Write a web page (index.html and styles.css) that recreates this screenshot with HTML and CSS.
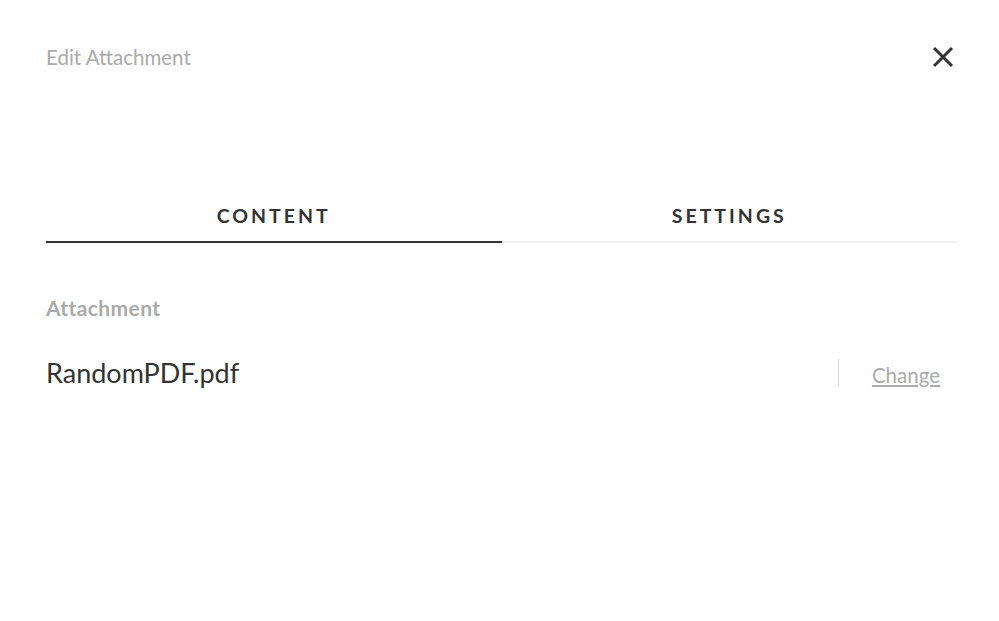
FILE: index.html
```html
<!DOCTYPE html>
<html lang="en">
<head>
    <meta charset="UTF-8">
    <meta name="viewport" content="width=device-width, initial-scale=1.0">
    <title>Edit Attachment</title>
    <link rel="stylesheet" href="styles.css">
</head>
<body>

    <div class="modal">
        <div class="modal-header">
            <h2 class="modal-title">Edit Attachment</h2>
            <button class="close-btn" aria-label="Close">
                <svg width="22" height="22" viewBox="0 0 22 22">
                    <path d="M2 2 L20 20 M20 2 L2 20" stroke="#333" stroke-width="3" fill="none"/>
                </svg>
            </button>
        </div>

        <div class="tabs">
            <div class="tab active">CONTENT</div>
            <div class="tab">SETTINGS</div>
        </div>

        <div class="section">
            <div class="label">Attachment</div>
            <div class="file-row">
                <span class="file-name">RandomPDF.pdf</span>
                <div class="file-actions">
                    <span class="divider"></span>
                    <a href="#" class="change-link">Change</a>
                </div>
            </div>
        </div>
    </div>

</body>
</html>
```

FILE: styles.css
```css
body {
    font-family: Lato, "Open Sans", sans-serif;
    background-color: #ffffff;
    color: #333;
    margin: 0;
}

.modal {
    padding: 38px 42px 0 46px;
}

.modal-header {
    display: flex;
    justify-content: space-between;
    align-items: center;
    height: 38px;
}

.modal-title {
    margin: 0;
    font-size: 20.5px;
    font-weight: 400;
    color: #aaa;
}

.close-btn {
    background: none;
    border: none;
    padding: 0;
    margin-right: 3px;
    cursor: pointer;
    display: flex;
}

.tabs {
    display: flex;
    margin-top: 128px;
}

.tab {
    flex: 1;
    text-align: center;
    font-size: 19.5px;
    font-weight: 700;
    letter-spacing: 3px;
    color: #333;
    padding-bottom: 14px;
    border-bottom: 2px solid #f0f0f0;
}

.tab.active {
    border-bottom-color: #333;
}

.section {
    margin-top: 52px;
}

.label {
    font-size: 21px;
    font-weight: 700;
    letter-spacing: 0.4px;
    color: #aaa;
}

.file-row {
    display: flex;
    justify-content: space-between;
    align-items: center;
    margin-top: 36px;
    padding-right: 17px;
}

.file-name {
    font-size: 27px;
    color: #333;
}

.file-actions {
    display: flex;
    align-items: center;
    gap: 33px;
}

.divider {
    width: 1px;
    height: 27px;
    background-color: #ddd;
}

.change-link {
    font-size: 20.5px;
    color: #aaa;
    text-decoration: underline;
    padding-top: 5px;
}
```
